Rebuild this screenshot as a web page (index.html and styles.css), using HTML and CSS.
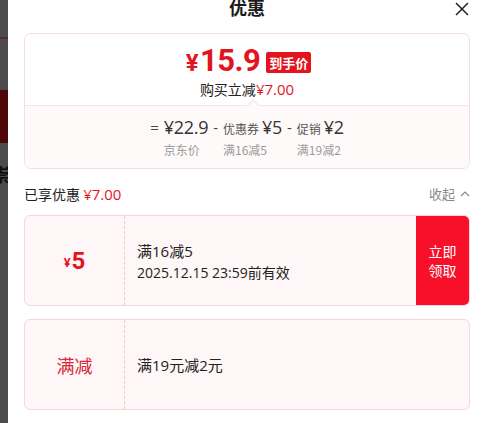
FILE: index.html
```html
<!DOCTYPE html>
<html lang="zh-CN">
<head>
<meta charset="utf-8">
<title>优惠</title>
<link rel="stylesheet" href="styles.css">
</head>
<body>
<div class="page">
  <div class="backdrop">
    <div class="bd-line"></div>
    <div class="bd-red"></div>
    <div class="bd-char">崇</div>
  </div>
  <div class="sheet">
    <div class="header">
      <span></span>
      <h1 class="title">优惠</h1>
      <svg class="close" width="14" height="14" viewBox="0 0 14 14"><path d="M1 1L13 13M13 1L1 13" stroke="#222" stroke-width="1.5" fill="none"/></svg>
    </div>

    <div class="summary">
      <div class="summary-top">
        <div class="price-row">
          <span class="price"><span class="yen">¥</span>15.9</span>
          <span class="tag">到手价</span>
        </div>
        <div class="save">购买立减<span class="red">¥7.00</span></div>
      </div>
      <div class="summary-bottom">
        <span class="notch"></span>
        <div class="formula">
          <span class="op">=</span>
          <div class="col"><div class="top"><span class="val">¥22.9</span></div><div class="sub">京东价</div></div>
          <span class="op">-</span>
          <div class="col"><div class="top"><span class="lbl">优惠券</span><span class="val">¥5</span></div><div class="sub">满16减5</div></div>
          <span class="op">-</span>
          <div class="col"><div class="top"><span class="lbl">促销</span><span class="val">¥2</span></div><div class="sub">满19减2</div></div>
        </div>
      </div>
    </div>

    <div class="enjoy">
      <div class="enjoy-left">已享优惠 <span class="red">¥7.00</span></div>
      <div class="collapse">收起<svg width="10" height="7" viewBox="0 0 10 7"><path d="M1 6L5 2L9 6" stroke="#888" stroke-width="1.2" fill="none"/></svg></div>
    </div>

    <div class="coupon">
      <div class="c-left"><span class="c-yen">¥</span><span class="c-amt">5</span></div>
      <div class="c-mid">
        <div class="c-title">满16减5</div>
        <div class="c-date">2025.12.15 23:59前有效</div>
      </div>
      <div class="c-btn">立即<br>领取</div>
    </div>

    <div class="coupon">
      <div class="c-left"><span class="c-type">满减</span></div>
      <div class="c-mid">
        <div class="c-title">满19元减2元</div>
      </div>
    </div>
  </div>
</div>
</body>
</html>
```
FILE: styles.css
```css
* { box-sizing: border-box; }
html, body { margin: 0; padding: 0; }
body {
  width: 487px;
  height: 423px;
  overflow: hidden;
  background: #fff;
  font-family: "Open Sans", "Noto Sans CJK SC", sans-serif;
  color: #222;
}
.page { display: flex; height: 423px; }
.backdrop {
  width: 8px;
  flex: none;
  background: #4b4b4b;
  display: flex;
  flex-direction: column;
  overflow: hidden;
}
.bd-line { height: 2px; margin-top: 37px; background: #5a2b2b; }
.bd-red { height: 53px; margin-top: 51px; background: #4e0606; }
.bd-char {
  margin-top: 22px;
  margin-left: -8px;
  font-family: "Noto Sans CJK SC", sans-serif;
  font-weight: 700;
  font-size: 18px;
  line-height: 18px;
  color: #111;
}
.sheet {
  flex: 1;
  background: #fff;
  padding: 0 17px 0 16px;
  display: flex;
  flex-direction: column;
}
.header {
  height: 33px;
  display: grid;
  grid-template-columns: 1fr auto 1fr;
  align-items: start;
}
.title {
  margin: -3px 0 0;
  font-family: "Noto Sans CJK SC", sans-serif;
  font-size: 18px;
  line-height: 20px;
  font-weight: 700;
  color: #1a1a1a;
}
.close { justify-self: end; margin-top: 2px; margin-right: 1px; }

.summary {
  border: 1px solid #f6dde1;
  border-radius: 7px;
  overflow: hidden;
}
.summary-top {
  height: 71px;
  display: flex;
  flex-direction: column;
  align-items: center;
  padding-top: 11px;
}
.price-row { display: flex; align-items: center; gap: 6px; height: 34px; margin-left: 3px; }
.price {
  color: #e4141f;
  font-family: "Roboto", sans-serif;
  font-weight: 700;
  font-size: 31px;
  line-height: 34px;
  letter-spacing: -0.5px;
}
.yen { font-size: 24px; margin-right: 2px; }
.tag {
  background: #e4141f;
  color: #fff;
  font-family: "Noto Sans CJK SC", sans-serif;
  font-weight: 700;
  font-size: 13px;
  line-height: 21px;
  padding: 0 3px;
  border-radius: 2px;
  margin-top: 1px;
}
.save {
  font-family: "Noto Sans CJK SC", sans-serif;
  font-size: 14px;
  line-height: 18px;
  margin-top: 1px;
  color: #222;
}
.save .red { font-size: 15px; }
.red { color: #e4141f; font-family: "Open Sans", sans-serif; }
.summary-bottom {
  position: relative;
  border-top: 1px solid #f6e3e6;
  background: #fffafa;
  height: 63px;
  display: flex;
  justify-content: center;
  padding-top: 10px;
}
.notch {
  position: absolute;
  top: -5px;
  left: 224px;
  width: 8px;
  height: 8px;
  background: #fffafa;
  border-top: 1px solid #f6e3e6;
  border-left: 1px solid #f6e3e6;
  transform: rotate(45deg);
}
.formula { display: flex; align-items: flex-start; gap: 5px; }
.op { font-size: 15px; line-height: 22px; color: #444; }
.col { display: flex; flex-direction: column; }
.top { display: flex; align-items: baseline; gap: 3px; height: 22px; }
.lbl { font-family: "Noto Sans CJK SC", sans-serif; font-size: 12px; color: #555; }
.val { font-family: "Open Sans", sans-serif; font-size: 18px; line-height: 22px; color: #333; font-weight: 500; letter-spacing: -0.3px; }
.sub {
  margin-top: 3px;
  font-family: "Noto Sans CJK SC", sans-serif;
  font-size: 12px;
  line-height: 18px;
  color: #9a9a9a;
}

.enjoy {
  height: 46px;
  display: flex;
  justify-content: space-between;
  align-items: center;
  padding-top: 3px;
}
.enjoy-left { font-family: "Noto Sans CJK SC", sans-serif; font-size: 14px; color: #222; }
.enjoy-left .red { font-size: 15px; }
.collapse {
  display: flex;
  align-items: center;
  gap: 5px;
  font-family: "Noto Sans CJK SC", sans-serif;
  font-size: 13px;
  color: #888;
}

.coupon {
  height: 91px;
  display: flex;
  background: #fef6f7;
  border: 1px solid #f5d7dc;
  border-radius: 6px;
  overflow: hidden;
  margin-bottom: 13px;
}
.c-left {
  width: 100px;
  flex: none;
  border-right: 1px dashed #ecc9cf;
  display: flex;
  align-items: center;
  justify-content: center;
  color: #e4141f;
}
.c-yen { font-size: 12px; font-weight: 700; margin-top: 4px; margin-right: 1px; }
.c-amt { font-family: "Roboto", sans-serif; font-size: 24px; font-weight: 700; }
.c-type { font-family: "Noto Sans CJK SC", sans-serif; font-size: 18px; color: #d6283a; }
.c-mid {
  flex: 1;
  display: flex;
  flex-direction: column;
  justify-content: center;
  padding-left: 12px;
  font-family: "Open Sans", "Noto Sans CJK SC", sans-serif;
  font-size: 14px;
  line-height: 21px;
  color: #222;
}
.c-title { font-size: 15px; margin-top: 2px; }
.c-btn {
  width: 53px;
  flex: none;
  background: #f8102a;
  color: #fff;
  display: flex;
  align-items: center;
  justify-content: center;
  text-align: center;
  font-family: "Noto Sans CJK SC", sans-serif;
  font-size: 14px;
  line-height: 19px;
}
```
